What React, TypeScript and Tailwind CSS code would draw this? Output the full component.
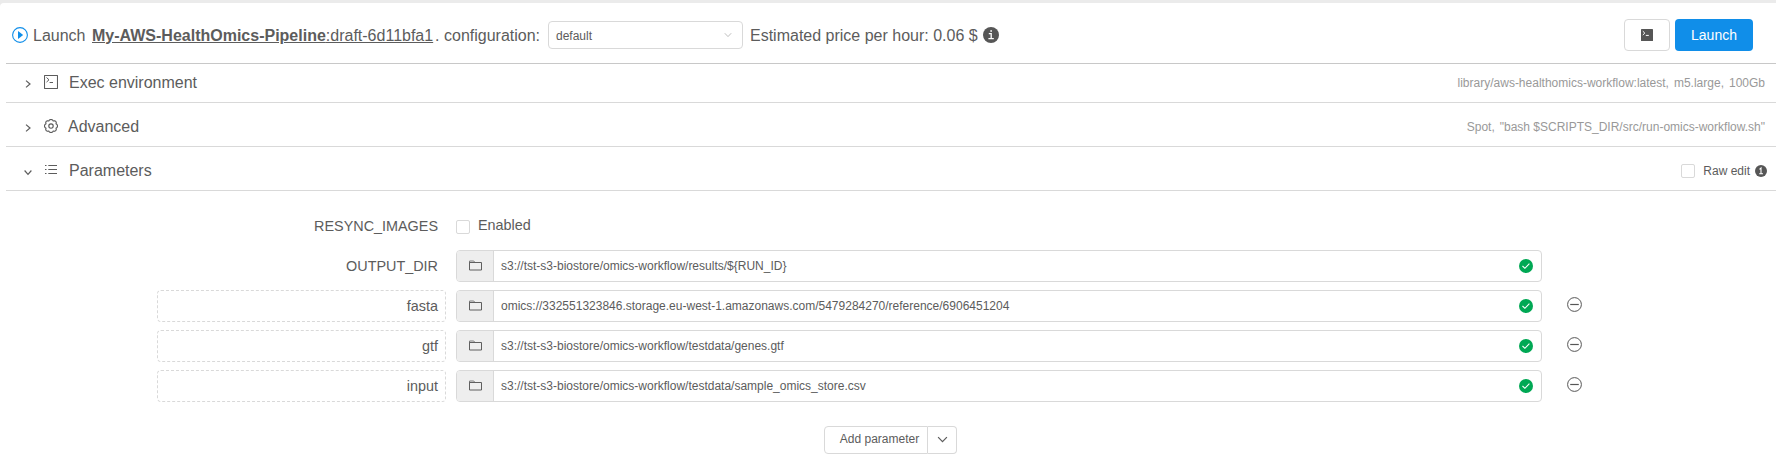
import type { ReactNode } from "react";

type IconProps = { className?: string };

const PlayIcon = ({ className }: IconProps) => (
  <svg className={className} viewBox="0 0 16 16" fill="none">
    <circle cx="8" cy="8" r="7.4" stroke="#108ee9" strokeWidth="1.1" />
    <path d="M6 4.1v7.8L11.2 8z" fill="#108ee9" />
  </svg>
);

const InfoIcon = ({ className }: IconProps) => (
  <svg className={className} viewBox="0 0 16 16" fill="none">
    <circle cx="8" cy="8" r="8" fill="#565656" />
    <path d="M7.300 3.200h1.700v1.500H7.300z" fill="#fff" />
    <path d="M5.800 6.700h2.400v5M5.400 11.700h5.400" stroke="#fff" strokeWidth="1.300" />
  </svg>
);

const SmallInfoIcon = ({ className }: IconProps) => (
  <svg className={className} viewBox="0 0 12 12" fill="none">
    <circle cx="6" cy="6" r="6" fill="#565656" />
    <path d="M4.500 4.300L6 3v5.500M4.200 8.700h3.800" stroke="#fff" strokeWidth="1.100" />
  </svg>
);

const Chevron = ({ className }: IconProps) => (
  <svg className={className} viewBox="0 0 10 10" fill="none" stroke="currentColor" strokeWidth="1.1">
    <path d="M1 2.8l4 4.2 4-4.2" />
  </svg>
);

const ChevronRight = ({ className }: IconProps) => (
  <svg className={className} viewBox="0 0 10 10" fill="none" stroke="currentColor" strokeWidth="1.2">
    <path d="M3 1.6L7 5 3 8.4" />
  </svg>
);

const SmallChevronDown = ({ className }: IconProps) => (
  <svg className={className} viewBox="0 0 10 10" fill="none" stroke="currentColor" strokeWidth="1.2">
    <path d="M1.600 3.500L5 7.300l3.400-3.800" />
  </svg>
);

const ConsoleIcon = ({ className }: IconProps) => (
  <svg className={className} viewBox="0 0 14 14" fill="none" stroke="currentColor">
    <rect x=".5" y=".5" width="13" height="13" rx=".3" strokeWidth="1.100" />
    <path d="M2.500 2.500l2.500 2.300-2.500 2.300M5.600 7.500h3.400" />
  </svg>
);

const ConsoleSolidIcon = ({ className }: IconProps) => (
  <svg className={className} viewBox="0 0 12 12" fill="none">
    <rect width="12" height="12" rx=".6" fill="#565656" />
    <path d="M1.8 2.2l2 1.9-2 1.9M4.8 6.4h3" stroke="#fff" strokeWidth="1" />
  </svg>
);

const GearIcon = ({ className }: IconProps) => (
  <svg className={className} viewBox="0 0 14 14" fill="none" stroke="currentColor" strokeWidth="1.150" strokeLinejoin="round">
    <path d="M5.400 1Q7 0 8.600 1L9.200 2 10.700 1.700Q12.100 2.100 12.300 3.500L12 4.800 13 5.500Q14 7 13 8.500L12 9.200 12.300 10.500Q12.100 11.900 10.700 12.300L9.200 12 8.600 13Q7 14 5.400 13L4.800 12 3.300 12.300Q1.900 11.900 1.700 10.500L2 9.200 1 8.500Q0 7 1 5.500L2 4.800 1.700 3.500Q1.900 2.100 3.300 1.700L4.800 2z" />
    <circle cx="7" cy="7" r="2.200" />
  </svg>
);

const ListIcon = ({ className }: IconProps) => (
  <svg className={className} viewBox="0 0 12 11" fill="none" stroke="currentColor">
    <path d="M0 1.500h1.500M0 5.500h1.500M0 9.500h1.500M3.300 1.500H12M3.300 5.500H12M3.300 9.500H12" />
  </svg>
);

const FolderIcon = ({ className }: IconProps) => (
  <svg className={className} viewBox="0 0 13 11" fill="none">
    <path d="M.5 10V1h4.300l1 1.500" stroke="#7d7d7d" />
    <path d="M.5 2.500h12v7.500H.5z" stroke="#5f5f5f" />
  </svg>
);

const CheckIcon = ({ className }: IconProps) => (
  <svg className={className} viewBox="0 0 14 14" fill="none">
    <circle cx="7" cy="7" r="7" fill="#00a854" />
    <path d="M3.500 7l2.400 2.300L10.400 4.600" stroke="#fff" strokeWidth="1.100" />
  </svg>
);

const MinusIcon = ({ className }: IconProps) => (
  <svg className={className} viewBox="0 0 15 15" fill="none" stroke="#565656">
    <circle cx="7.500" cy="7.500" r="6.900" />
    <path d="M3.200 7.500h8.600" strokeWidth="1.200" />
  </svg>
);

const Checkbox = () => <span className="block h-3.5 w-3.5 shrink-0 rounded-xs border border-[#d9d9d9] bg-white" />;

type SectionProps = { title: ReactNode; icon: ReactNode; open?: boolean; className: string; children: ReactNode };

const Section = ({ title, icon, open, className, children }: SectionProps) => (
  <div className={`flex items-center border-b border-[#d9d9d9] ${className}`}>
    <span className="flex w-[38px] pl-[17px] pt-0.5">
      {open ? <SmallChevronDown className="h-[10px] w-[10px]" /> : <ChevronRight className="h-[10px] w-[10px]" />}
    </span>
    <span className="flex w-[24px] items-center pb-0.5">{icon}</span>
    <span className="text-base">{title}</span>
    <div className="ml-auto flex items-center text-xs">{children}</div>
  </div>
);

const parameters = [
  { name: "OUTPUT_DIR", value: "s3://tst-s3-biostore/omics-workflow/results/${RUN_ID}", custom: false },
  {
    name: "fasta",
    value: "omics://332551323846.storage.eu-west-1.amazonaws.com/5479284270/reference/6906451204",
    custom: true,
  },
  { name: "gtf", value: "s3://tst-s3-biostore/omics-workflow/testdata/genes.gtf", custom: true },
  { name: "input", value: "s3://tst-s3-biostore/omics-workflow/testdata/sample_omics_store.csv", custom: true },
];

const ParameterRow = ({ name, value, custom }: (typeof parameters)[number]) => (
  <div className="flex h-8 items-stretch">
    <div
      className={`mr-2.5 flex w-[289px] items-center justify-end rounded border border-dashed pr-[7px] pt-0.5 text-[14.4px] ${
        custom ? "border-[#d9d9d9]" : "border-transparent"
      }`}
    >
      {name}
    </div>
    <div className="flex w-[1086px] items-stretch rounded border border-[#d9d9d9]">
      <span className="flex w-[37px] items-center justify-center rounded-l-[3px] border-r border-[#d9d9d9] bg-[#eee] pb-0.5">
        <FolderIcon className="h-[11px] w-[13px]" />
      </span>
      <span className="flex items-center pl-[7px] text-xs">{value}</span>
      <span className="ml-auto flex items-center pr-2">
        <CheckIcon className="h-3.5 w-3.5" />
      </span>
    </div>
    {custom && (
      <span className="flex items-center pb-[3px] pl-[25px]">
        <MinusIcon className="h-[15px] w-[15px]" />
      </span>
    )}
  </div>
);

export default function App() {
  return (
    <div className="h-[467px] w-[1776px] overflow-hidden whitespace-nowrap bg-[#ebebeb] pt-[3px] font-['Liberation_Sans',Arial,sans-serif] text-[#5c5c5c]">
      <div className="h-full rounded-tl bg-white pl-1.5">
        <header className="flex h-[61px] items-center border-b border-[#c8c8c8] pl-1.5 pt-1">
          <PlayIcon className="h-4 w-4" />
          <span className="ml-[5px] w-[59px] pt-0.5 text-base">Launch</span>
          <span className="w-[343px] pt-0.5 text-base underline">
            <b>My-AWS-HealthOmics-Pipeline</b>:draft-6d11bfa1
          </span>
          <span className="w-[9px] pt-0.5 text-base">.</span>
          <span className="w-[104px] pt-0.5 text-base">configuration:</span>
          <div className="flex h-7 w-[195px] items-center justify-between rounded border border-[#d9d9d9] pl-[7px] pr-2.5 text-xs">
            <span className="pt-0.5">default</span>
            <Chevron className="h-2 w-2 text-[#b5b5b5]" />
          </div>
          <span className="ml-[7px] pt-0.5 text-base">Estimated price per hour: 0.06 $</span>
          <InfoIcon className="ml-[5px] h-4 w-4" />
          <div className="ml-auto mr-[23px] flex gap-[5px]">
            <button className="flex h-8 w-[46px] items-center justify-center rounded border border-[#d9d9d9] bg-white">
              <ConsoleSolidIcon className="h-3 w-3" />
            </button>
            <button className="h-8 w-[78px] rounded bg-[#108ee9] text-sm text-white">Launch</button>
          </div>
        </header>

        <Section
          title={<span className="pl-px">Exec environment</span>}
          className="h-[39px]"
          icon={<ConsoleIcon className="h-3.5 w-3.5" />}
        >
          <div className="flex gap-[5px] pr-[11px] text-[#999]">
            <span>library/aws-healthomics-workflow:latest,</span>
            <span>m5.large,</span>
            <span>100Gb</span>
          </div>
        </Section>
        <Section title="Advanced" className="h-11 pt-1" icon={<GearIcon className="h-3.5 w-3.5" />}>
          <div className="flex gap-[5px] pr-[11px] text-[#999]">
            <span>Spot,</span>
            <span>"bash $SCRIPTS_DIR/src/run-omics-workflow.sh"</span>
          </div>
        </Section>
        <Section
          title={<span className="pl-px">Parameters</span>}
          open
          className="h-11 pt-1"
          icon={<ListIcon className="ml-px h-[11px] w-3" />}
        >
          <Checkbox />
          <span className="ml-2">Raw edit</span>
          <SmallInfoIcon className="ml-[5px] mr-[9px] h-3 w-3" />
        </Section>

        <div className="flex flex-col gap-2 pl-[151px] pt-5">
          <div className="flex h-[31px] items-center">
            <span className="mr-2.5 w-[289px] pr-2 pt-px text-right text-[14.4px]">RESYNC_IMAGES</span>
            <Checkbox />
            <span className="ml-2 pb-0.5 text-[14.4px]">Enabled</span>
          </div>
          {parameters.map((parameter) => (
            <ParameterRow key={parameter.name} {...parameter} />
          ))}
        </div>

        <div className="flex pl-[818px] pt-6">
          <button className="h-7 w-[104px] rounded-l border border-[#d9d9d9] pb-0.5 pl-[7px] text-xs">Add parameter</button>
          <button className="flex h-7 w-[29px] items-center justify-center rounded-r border border-l-0 border-[#d9d9d9] pb-0.5">
            <Chevron className="h-[11px] w-[11px]" />
          </button>
        </div>
      </div>
    </div>
  );
}
